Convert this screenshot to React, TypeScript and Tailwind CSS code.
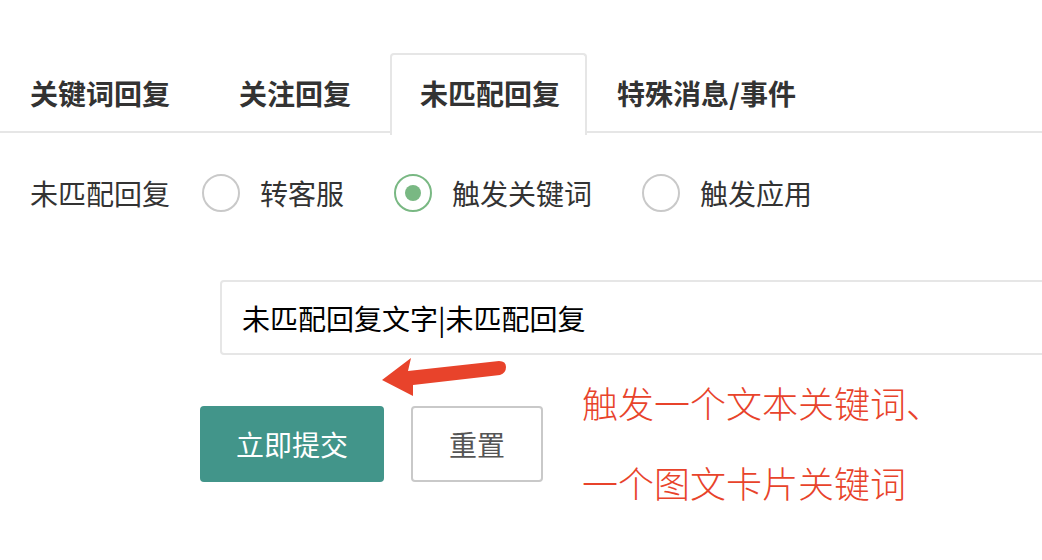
const FONT = { fontFamily: '"Noto Sans CJK SC", "Noto Sans", sans-serif' };

const TABS = [
  { label: "关键词回复", cls: "" },
  { label: "关注回复", cls: "ml-[9px]" },
  { label: "未匹配回复", cls: "ml-[9px]", active: true },
  { label: "特殊消息/事件", cls: "" },
];

const OPTIONS = [
  { label: "转客服", checked: false },
  { label: "触发关键词", checked: true },
  { label: "触发应用", checked: false },
];

function Radio({ checked }: { checked: boolean }) {
  return (
    <span
      className={`flex h-[38px] w-[38px] items-center justify-center rounded-full border-2 ${
        checked ? "border-[#79b883]" : "border-[#c9c9c9]"
      }`}
    >
      {checked && <span className="h-[16px] w-[16px] rounded-full bg-[#79b883]" />}
    </span>
  );
}

export default function App() {
  return (
    <div className="relative h-[560px] w-[1042px] overflow-hidden bg-white text-[#333]" style={FONT}>
      {/* tabs */}
      <div className="mt-[53px] flex h-[80px] border-b-2 border-[#e6e6e6]">
        {TABS.map((t) => (
          <div
            key={t.label}
            className={`flex items-center text-[28px] font-bold leading-none ${t.cls} ${
              t.active
                ? "-mb-[2px] h-[82px] rounded-t-[4px] border-2 border-b-0 border-[#e6e6e6] bg-white pb-[4px] pl-[28px] pr-[25px]"
                : "px-[30px] pt-[2px]"
            }`}
          >
            {t.label}
          </div>
        ))}
      </div>

      {/* radio row */}
      <div className="mt-[41px] flex items-center pl-[30px] text-[28px] leading-none">
        <span className="mr-[32px]">未匹配回复</span>
        <div className="flex items-center gap-[50px]">
          {OPTIONS.map((o) => (
            <label key={o.label} className="flex items-center gap-[20px]">
              <Radio checked={o.checked} />
              <span>{o.label}</span>
            </label>
          ))}
        </div>
      </div>

      {/* input */}
      <div className="ml-[220px] mt-[68px] flex h-[75px] w-[840px] items-center rounded-[4px] border-2 border-[#e6e6e6] pl-[20px] text-[28px] leading-none text-[#000]">
        未匹配回复文字|未匹配回复
      </div>

      {/* buttons */}
      <div className="ml-[200px] mt-[51px] flex gap-[27px]">
        <button className="h-[76px] w-[184px] rounded-[4px] bg-[#42958a] text-[28px] text-white" style={FONT}>
          立即提交
        </button>
        <button
          className="h-[76px] w-[132px] rounded-[4px] border-2 border-[#c9c9c9] bg-white text-[28px] text-[#555]"
          style={FONT}
        >
          重置
        </button>
      </div>

      {/* annotation */}
      <svg className="absolute left-0 top-0" width="1042" height="560" viewBox="0 0 1042 560">
        <path
          d="M382 380 L411 358 L408 371 L499 361 Q506 361 506 367 Q506 373 500 375 L413 385 L413 396 Z"
          fill="#e8432b"
        />
      </svg>
      <div className="absolute left-[582px] top-[384px] flex flex-col gap-[44px] text-[36px] font-light leading-none text-[#e8432b]">
        <span>触发一个文本关键词、</span>
        <span>一个图文卡片关键词</span>
      </div>
    </div>
  );
}
